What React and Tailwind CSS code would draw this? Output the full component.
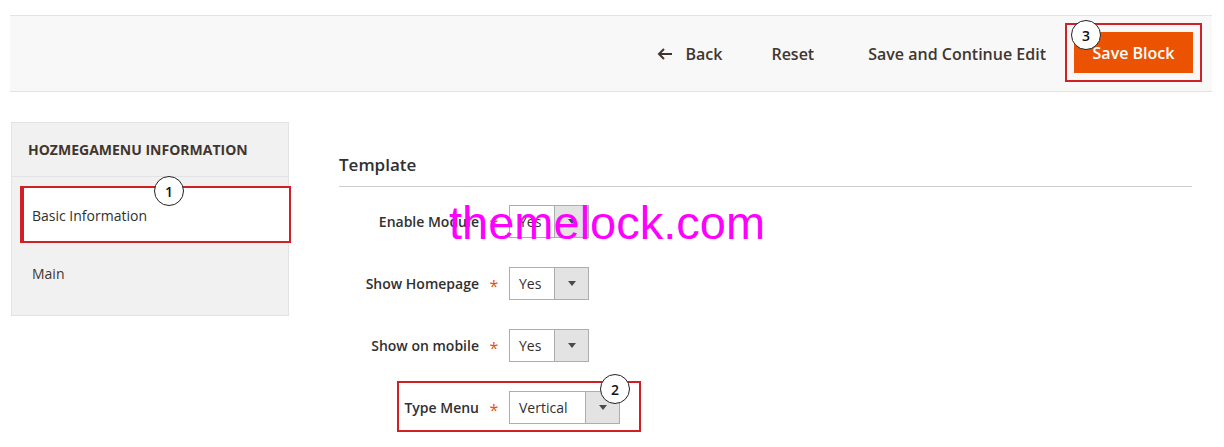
import React from 'react';

const Badge = ({ n, className }) => (
    <div className={`absolute w-[30px] h-[30px] rounded-full bg-white border-[1.5px] border-[#222] flex items-center justify-center text-[14px] font-semibold text-[#111] ${className}`}>
        {n}
    </div>
);

const Select = ({ value, wide }) => (
    <div className={`flex h-[33px] border border-[#adadad] bg-white ${wide ? 'w-[111px]' : 'w-[80px]'}`}>
        <div className="flex-1 flex items-center pl-[9px] text-[14px] text-[#303030]">{value}</div>
        <div className="w-[34px] bg-[#e3e3e3] border-l border-[#adadad] flex items-center justify-center">
            <svg width="8" height="5" viewBox="0 0 8 5"><path d="M0 0h8L4 5z" fill="#514943" /></svg>
        </div>
    </div>
);

const Row = ({ label, value, wide, children }) => (
    <div className="relative flex items-center h-[33px]">
        <div className="w-[140px] text-right text-[14px] font-semibold text-[#303030]">{label}</div>
        <div className="w-[30px] text-center text-[16px] text-[#eb5202] pt-[4px]">*</div>
        <Select value={value} wide={wide} />
        {children}
    </div>
);

export default function App() {
    return (
        <div className="relative w-[1224px] h-[447px] overflow-hidden bg-white font-['Open_Sans',sans-serif] text-[#303030]">
            {/* Page actions */}
            <div className="ml-[10px] mt-[15px] w-[1202px] h-[77px] bg-[#f8f8f8] border-y border-[#e3e3e3] flex items-center justify-end pr-[10px]">
                <button className="flex items-center gap-[12px] text-[16px] font-semibold text-[#41362f] mr-[49px]">
                    <svg width="16" height="12" viewBox="0 0 16 12" fill="none" stroke="#41362f" strokeWidth="2">
                        <path d="M15 6H2M7 1L2 6l5 5" />
                    </svg>
                    Back
                </button>
                <button className="text-[16px] font-semibold text-[#41362f] mr-[54px]">Reset</button>
                <button className="text-[16px] font-semibold text-[#41362f] mr-[19px]">Save and Continue Edit</button>
                <div className="relative border-2 border-[#d01f25] p-[7px] mb-[2px]">
                    <button className="w-[119px] h-[41px] bg-[#eb5202] text-white text-[16px] font-semibold">Save Block</button>
                    <Badge n="3" className="left-[4px] -top-[5px]" />
                </div>
            </div>

            <div className="flex mt-[30px]">
                {/* Sidebar */}
                <div className="ml-[11px] w-[278px] h-[194px] bg-[#f1f1f1] border border-[#e3e3e3]">
                    <div className="h-[54px] flex items-center pl-[16px] border-b border-[#e3e3e3] text-[14px] font-bold text-[#41362f] uppercase">
                        HOZMEGAMENU INFORMATION
                    </div>
                    <div className="relative mt-[9px] ml-[8px] mr-[-3px] h-[57px] bg-white border-2 border-l-4 border-[#d01f25] flex items-center pl-[8px] pt-[2px] text-[14px] text-[#303030]">
                        Basic Information
                        <Badge n="1" className="left-[130px] -top-[12px]" />
                    </div>
                    <div className="pl-[20px] pt-[20px] text-[14px] text-[#41362f]">Main</div>
                </div>

                {/* Form */}
                <div className="ml-[50px] w-[853px]">
                    <div className="h-[65px] pt-[31px] border-b border-[#cccccc] text-[17px] font-semibold text-[#303030] leading-[24px]">
                        Template
                    </div>
                    <div className="mt-[18px] flex flex-col gap-[29px]">
                        <Row label="Enable Module" value="Yes" />
                        <Row label="Show Homepage" value="Yes" />
                        <Row label="Show on mobile" value="Yes" />
                        <Row label="Type Menu" value="Vertical" wide>
                            <div className="absolute left-[58px] top-[-10px] w-[244px] h-[51px] border-2 border-[#d01f25]" />
                            <Badge n="2" className="left-[261px] -top-[17px]" />
                        </Row>
                    </div>
                </div>
            </div>

            {/* Watermark */}
            <div className="absolute left-[449px] top-[193px] text-[47px] leading-[60px] text-[#ff00ff] font-['Liberation_Sans',sans-serif]">
                themelock.com
            </div>
        </div>
    );
}
